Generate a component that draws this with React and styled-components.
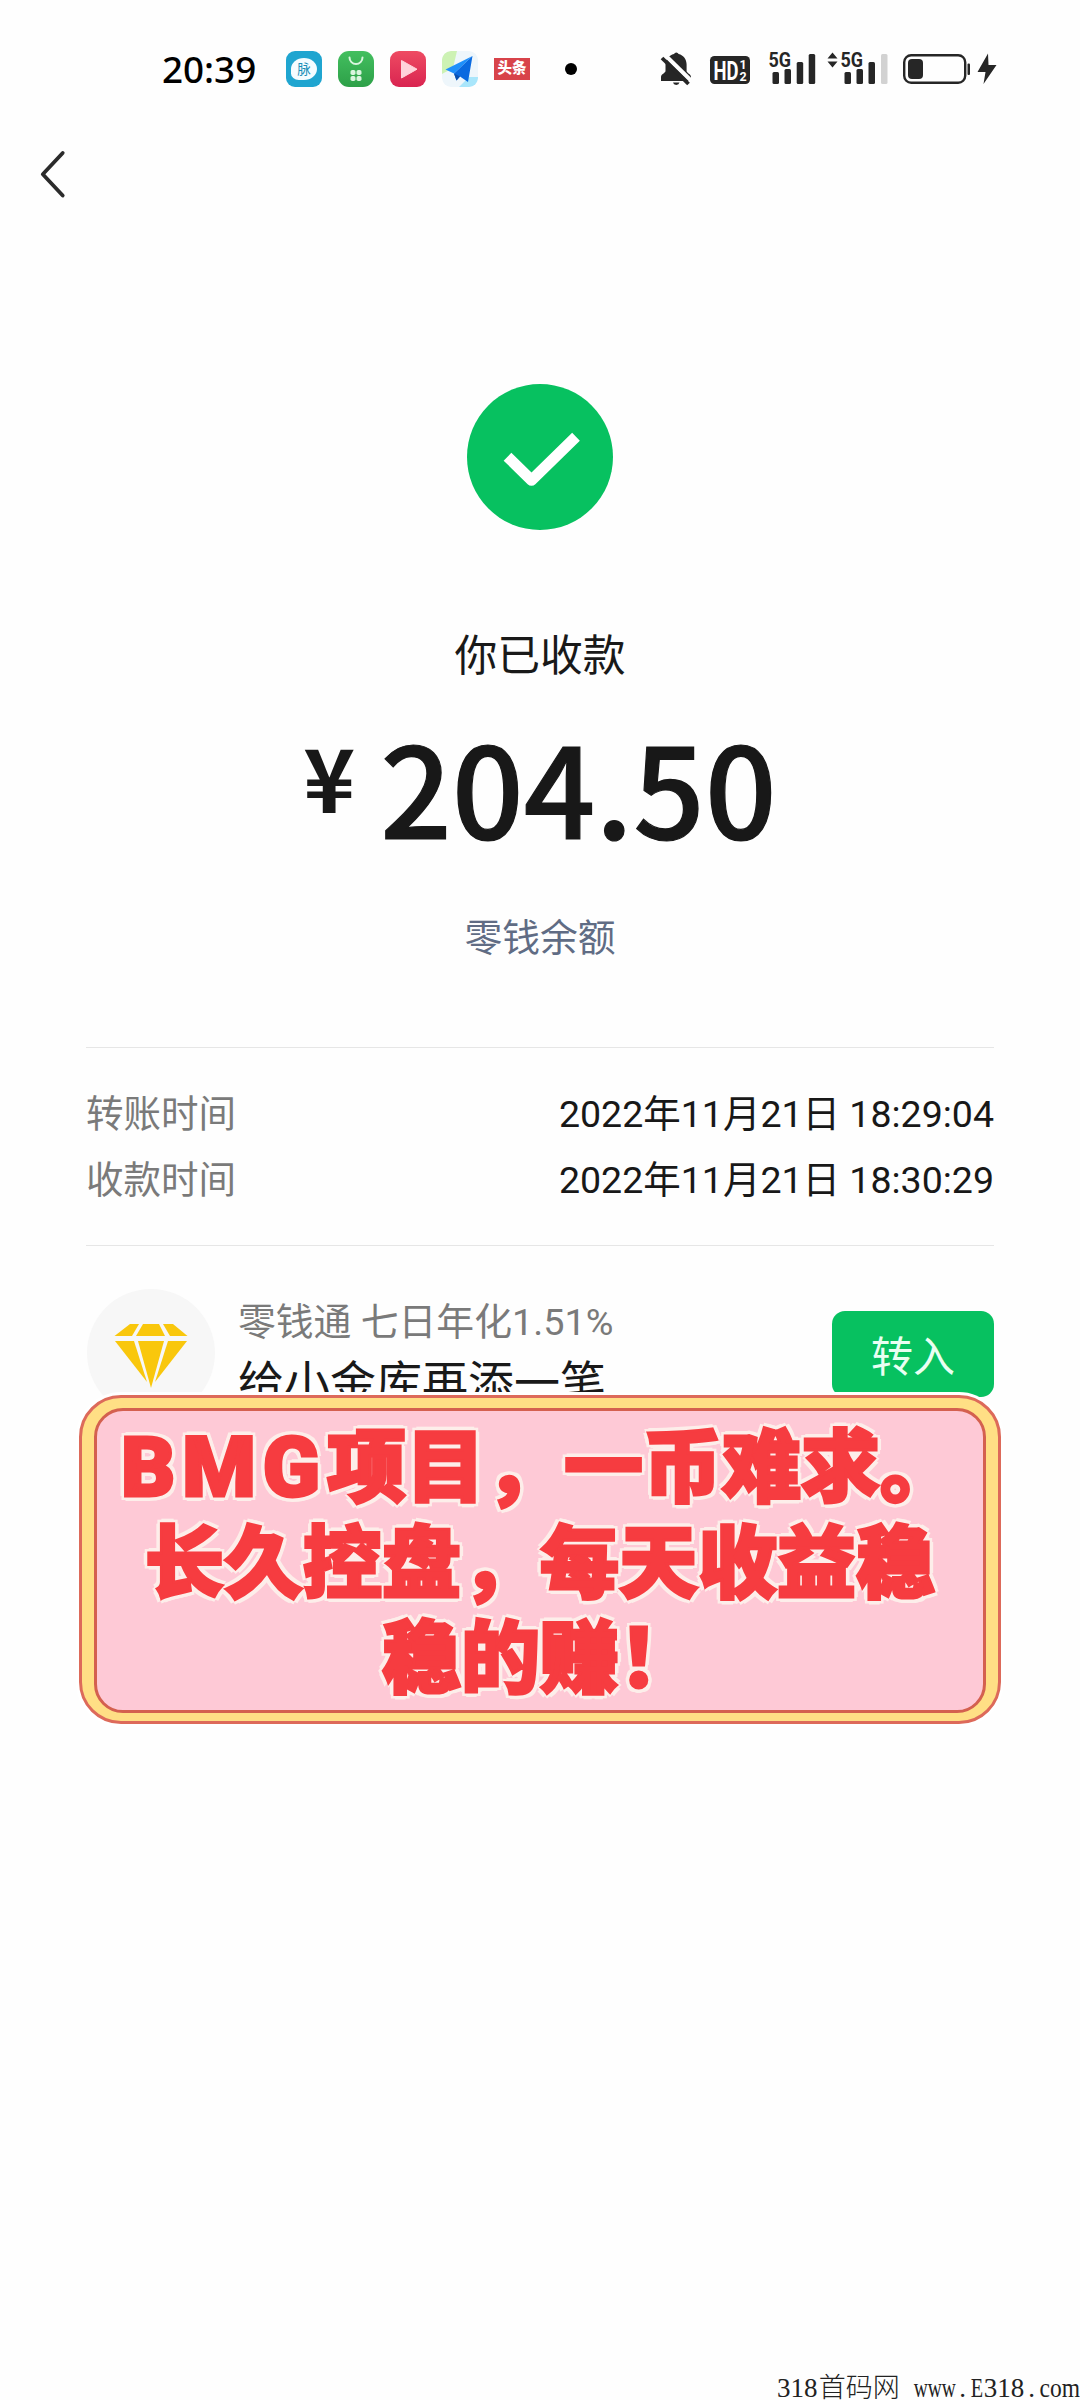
import React from 'react';
import styled, { createGlobalStyle } from 'styled-components';

const GlobalStyle = createGlobalStyle`
  body {
    margin: 0;
    background: #fefefe;
    font-family: Roboto, "Noto Sans CJK SC", sans-serif;
    color: #191919;
  }
`;

const Screen = styled.div`
  position: relative;
  display: flex;
  flex-direction: column;
  width: 1080px;
  height: 2400px;
  overflow: hidden;
`;

const StatusBar = styled.header`
  display: flex;
  align-items: center;
  height: 138px;
  padding: 0 83px 0 162px;
  box-sizing: border-box;
  flex-shrink: 0;
`;

const Clock = styled.span`
  width: 124px;
  font-family: "Noto Sans", sans-serif;
  font-size: 36.8px;
  font-weight: 500;
  line-height: 48px;
  color: #000;
`;

const AppIcons = styled.div`
  display: flex;
  align-items: center;
  gap: 16px;
`;

const AppIcon = styled.div`
  display: flex;
  align-items: center;
  justify-content: center;
  width: 36px;
  height: 36px;
  border-radius: ${({ $radius }) => $radius || '9px'};
  background: ${({ $bg }) => $bg || 'transparent'};
  overflow: hidden;
`;

const Bubble = styled.span`
  display: flex;
  align-items: center;
  justify-content: center;
  width: 26px;
  height: 22px;
  border-radius: 50% 50% 50% 30%;
  background: #f4fcff;
  color: #1a8fb8;
  font-size: 13.5px;
  line-height: 20px;
`;

const NewsTag = styled.span`
  width: 36px;
  height: 22px;
  background: #d8434a;
  color: #fff;
  font-size: 14.5px;
  font-weight: 900;
  line-height: 21px;
  text-align: center;
`;

const Dot = styled.i`
  width: 12px;
  height: 12px;
  margin-left: 35px;
  border-radius: 50%;
  background: #000;
`;

const SystemIcons = styled.div`
  display: flex;
  margin-left: auto;
`;

const NavBar = styled.nav`
  display: flex;
  align-items: center;
  height: 72px;
  padding-left: 38px;
  flex-shrink: 0;
`;

const Result = styled.section`
  display: flex;
  flex-direction: column;
  align-items: center;
  padding-top: 174px;
`;

const ResultTitle = styled.h1`
  margin: 96px 0 0;
  font-size: 42.8px;
  font-weight: 400;
  line-height: 60px;
`;

const Amount = styled.div`
  display: flex;
  height: 130px;
  margin-top: 33px;
  font-family: "Noto Sans CJK SC", sans-serif;
  font-weight: 500;
  color: #181818;
`;

const Currency = styled.span`
  width: 77px;
  font-size: 88px;
  font-weight: 700;
  line-height: 111px;
`;

const Digits = styled.span`
  font-size: 125.5px;
  line-height: 130px;
  letter-spacing: 0.2px;
  -webkit-text-stroke: 1.2px #181818;
`;

const Balance = styled.p`
  margin: 64px 0 0;
  font-size: 37.8px;
  line-height: 50px;
  color: #606c84;
`;

const Details = styled.dl`
  margin: 84px 86px 0 86px;
  padding: 33px 0 32px;
  border-top: 1.5px solid #e6e6e6;
  border-bottom: 1.5px solid #e6e6e6;
`;

const DetailRow = styled.div`
  display: flex;
  justify-content: space-between;
  font-size: 37.5px;
  line-height: 66px;
`;

const Label = styled.dt`
  color: #7a7a7a;
`;

const Value = styled.dd`
  margin: 0;
  color: #181818;
`;

const Promo = styled.section`
  display: flex;
  align-items: flex-start;
  margin: 43px 86px 0 87px;
`;

const PromoIcon = styled.div`
  display: flex;
  align-items: center;
  justify-content: center;
  width: 128px;
  height: 128px;
  padding-top: 5px;
  box-sizing: border-box;
  border-radius: 50%;
  background: #f7f7f7;
`;

const PromoText = styled.div`
  flex: 1;
  padding: 8px 0 0 23px;
`;

const PromoLabel = styled.p`
  margin: 0 0 6px;
  font-size: 37.8px;
  line-height: 50px;
  color: #7a7a7a;
`;

const PromoTitle = styled.p`
  margin: 0;
  font-size: 46px;
  line-height: 60px;
`;

const TransferButton = styled.button`
  width: 162px;
  height: 86px;
  margin-top: 22px;
  padding: 8px 0 0;
  border: 0;
  border-radius: 13px;
  background: #07c160;
  color: #e9fff2;
  font: 400 42px/76px Roboto, "Noto Sans CJK SC", sans-serif;
`;

/* sticker laid over the page */
const Sticker = styled.aside`
  position: absolute;
  top: 1395px;
  left: 79px;
  width: 922px;
  height: 329px;
  padding: 10px 12px 8px;
  box-sizing: border-box;
  border: 3px solid #dd6a5a;
  border-radius: 42px;
  background: #ffdf85;
  box-shadow: 0 0 0 3px #fff;
`;

const StickerBody = styled.div`
  height: 100%;
  padding-top: 3px;
  box-sizing: border-box;
  border: 3px solid #d4604f;
  border-radius: 29px;
  background: #fec9d6;
`;

/* red stroke thickens the glyphs, the shadows build the cream outline */
const StickerLine = styled.p`
  margin: 0;
  font-family: "Noto Sans CJK SC", sans-serif;
  font-size: 79px;
  font-weight: 900;
  line-height: 95px;
  text-align: center;
  white-space: nowrap;
  color: #f63c40;
  -webkit-text-stroke: 3px #f63c40;
  text-shadow: 5px 0 #fdeeea, -5px 0 #fdeeea, 0 5px #fdeeea, 0 -5px #fdeeea,
    4px 4px #fdeeea, -4px 4px #fdeeea, 4px -4px #fdeeea, -4px -4px #fdeeea;
`;

const Latin = styled.span`
  font-family: Roboto, sans-serif;
  font-size: 84px;
  letter-spacing: 7px;
  line-height: 1;
`;

const Watermark = styled.footer`
  position: absolute;
  right: 0;
  bottom: 0;
  display: flex;
  font-family: "Liberation Serif", "Noto Sans CJK SC", serif;
  font-size: 27px;
  line-height: 23px;
  font-weight: 300;
  color: #222;
`;

const Piece = styled.span`
  display: flex;
  justify-content: center;
  width: ${({ $cells }) => $cells * 13.8}px;
  transform: scaleX(${({ $squeeze }) => $squeeze || 1});
`;

const BackIcon = () => (
  <svg width="30" height="50" viewBox="0 0 30 50" fill="none" stroke="#2b2b2b" strokeWidth="3.8" strokeLinecap="round" strokeLinejoin="round">
    <path d="M24.7 4 4.8 25.2 24.7 46.5" />
  </svg>
);

const SuccessIcon = () => (
  <svg width="146" height="146" viewBox="0 0 146 146" fill="none">
    <circle cx="73" cy="73" r="73" fill="#07c160" />
    <path d="M40.500 72.700 64.500 96.200 109 52.700" stroke="#fff" strokeWidth="11" strokeLinejoin="round" />
  </svg>
);

const DiamondIcon = () => (
  <svg width="74" height="66" viewBox="0 0 74 66" fill="#f9c70c">
    <path d="M16 1H25L18 13H0.500Z" />
    <path d="M29 1H45L51 13H22Z" />
    <path d="M49 1H59L73.500 13H56Z" />
    <path d="M1 18H20L33 59Z" />
    <path d="M24 18H50L37 65Z" />
    <path d="M54 18H73L41 59Z" />
  </svg>
);

const BagIcon = () => (
  <svg width="36" height="36" viewBox="0 0 36 36">
    <path d="M11.500 6.500a6.500 6.500 0 0 0 13 0" fill="none" stroke="#d9f5de" strokeWidth="2" strokeLinecap="round" />
    <g fill="#d9f5de">
      <rect x="12.500" y="19" width="5" height="5" rx="1.800" />
      <rect x="18.500" y="19" width="5" height="5" rx="1.800" />
      <rect x="12.500" y="25" width="5" height="5" rx="1.800" />
      <rect x="18.500" y="25" width="5" height="5" rx="1.800" />
    </g>
  </svg>
);

const PlayIcon = () => (
  <svg width="36" height="36" viewBox="0 0 36 36">
    <path d="M11.500 9.500v17.500L27 18.200Z" fill="#ffd3da" stroke="#ffd3da" strokeWidth="1" strokeLinejoin="round" />
  </svg>
);

const PlaneIcon = () => (
  <svg width="36" height="36" viewBox="0 0 36 36">
    <rect width="36" height="36" rx="8" fill="#eef6fb" />
    <path d="M8 0h7L11 17 0 23V8a8 8 0 0 1 8-8Z" fill="#cdf2b4" />
    <path d="M27 26h9v2a8 8 0 0 1-8 8H17Z" fill="#a9e6fb" />
    <path d="M30.500 5 3.500 18.500 12 22.500Z" fill="#1e90fb" />
    <path d="M30.500 5 12 22.500 14.500 29.500 18 25.500 26 31Z" fill="#0a6ae0" />
    <path d="M12 22.500 14.500 29.500 18 25.500Z" fill="#0b4fae" />
  </svg>
);

const StatusGlyphs = () => (
  <svg width="340" height="54" viewBox="657 42 340 54" fill="#262626">
    {/* muted bell */}
    <path d="M674 54a2.500 2.500 0 0 1 4.600 0c5 1.300 8 5.500 8 10.500v6.500c0 2 4.400 3 4.400 6v4H661v-4c0-3 4.500-4 4.500-6v-6.500c0-5 3.500-9.200 8.500-10.500Z" />
    <path d="M673 82.500h6.500a3.300 3 0 0 1-6.500 0Z" />
    <path d="M665 55 692 81.500" stroke="#fefefe" strokeWidth="4" />
    <path d="M662 58 688.500 84" stroke="#262626" strokeWidth="3.800" />
    {/* HD badge */}
    <rect x="710" y="56" width="40" height="28" rx="4.500" />
    <g fill="#fff" fontFamily="Roboto, sans-serif" fontWeight="700">
      <text x="713.500" y="79.500" fontSize="25" textLength="25" lengthAdjust="spacingAndGlyphs">HD</text>
      <text x="739.500" y="69" fontSize="12.500">1</text>
      <text x="739.500" y="81" fontSize="12.500">2</text>
    </g>
    <g fontFamily="Roboto, sans-serif" fontWeight="700" fontSize="20.500">
      <text x="768.500" y="67" textLength="22.500" lengthAdjust="spacingAndGlyphs">5G</text>
      <text x="840.500" y="67" textLength="22.500" lengthAdjust="spacingAndGlyphs">5G</text>
    </g>
    <rect x="772.500" y="72" width="6.500" height="12" rx="1.500" />
    <rect x="784.500" y="69" width="6.500" height="15" rx="1.500" />
    <rect x="796.700" y="62" width="6.500" height="22" rx="1.500" />
    <rect x="808.700" y="54" width="6.500" height="30" rx="1.500" />
    <path d="M827.500 58.500 832.500 52.500 837.500 58.500ZM827.500 61.500 832.500 67.500 837.500 61.500Z" />
    <rect x="844.500" y="72" width="6.500" height="12" rx="1.500" />
    <rect x="856.500" y="69" width="6.500" height="15" rx="1.500" />
    <rect x="868.500" y="62" width="6.500" height="22" rx="1.500" />
    <rect x="881" y="54" width="6.500" height="30" rx="1.500" fill="#d2d2d2" />
    {/* battery */}
    <rect x="904.200" y="55.200" width="61" height="27.600" rx="7" fill="none" stroke="#262626" strokeWidth="2.400" />
    <rect x="908" y="59" width="15" height="20" rx="4" />
    <rect x="967.500" y="63.500" width="2.500" height="11.500" rx="1" />
    <path d="M988 53.500 977.500 72H985.500L983.500 84 996.500 65H988.500Z" />
  </svg>
);

const details = [
  { label: '转账时间', value: '2022年11月21日 18:29:04' },
  { label: '收款时间', value: '2022年11月21日 18:30:29' },
];

const App = () => {
  return (
    <Screen lang="zh-CN">
      <GlobalStyle />
      <StatusBar>
        <Clock>20:39</Clock>
        <AppIcons>
          <AppIcon $bg="#1fa5d0"><Bubble>脉</Bubble></AppIcon>
          <AppIcon $bg="linear-gradient(#43bf5f, #2da048)" $radius="11px"><BagIcon /></AppIcon>
          <AppIcon $bg="linear-gradient(#ee4b62, #d92450)"><PlayIcon /></AppIcon>
          <AppIcon><PlaneIcon /></AppIcon>
          <AppIcon $radius="0"><NewsTag>头条</NewsTag></AppIcon>
        </AppIcons>
        <Dot />
        <SystemIcons><StatusGlyphs /></SystemIcons>
      </StatusBar>

      <NavBar><BackIcon /></NavBar>

      <Result>
        <SuccessIcon />
        <ResultTitle>你已收款</ResultTitle>
        <Amount>
          <Currency>¥</Currency>
          <Digits>204.50</Digits>
        </Amount>
        <Balance>零钱余额</Balance>
      </Result>

      <Details>
        {details.map(({ label, value }) => (
          <DetailRow key={label}>
            <Label>{label}</Label>
            <Value>{value}</Value>
          </DetailRow>
        ))}
      </Details>

      <Promo>
        <PromoIcon><DiamondIcon /></PromoIcon>
        <PromoText>
          <PromoLabel>零钱通 七日年化1.51%</PromoLabel>
          <PromoTitle>给小金库再添一笔</PromoTitle>
        </PromoText>
        <TransferButton>转入</TransferButton>
      </Promo>

      <Sticker>
        <StickerBody>
          <StickerLine><Latin>BMG</Latin>项目，一币难求。</StickerLine>
          <StickerLine>长久控盘，每天收益稳</StickerLine>
          <StickerLine>稳的赚！</StickerLine>
        </StickerBody>
      </Sticker>

      <Watermark>
        <Piece $cells={3}>318</Piece>
        <Piece $cells={6}>首码网</Piece>
        <Piece $cells={1} />
        <Piece $cells={3} $squeeze={0.72}>www</Piece>
        <Piece $cells={1}>.</Piece>
        <Piece $cells={1} $squeeze={0.75}>E</Piece>
        <Piece $cells={3}>318</Piece>
        <Piece $cells={1}>.</Piece>
        <Piece $cells={3} $squeeze={0.87}>com</Piece>
      </Watermark>
    </Screen>
  );
};

export default App;
